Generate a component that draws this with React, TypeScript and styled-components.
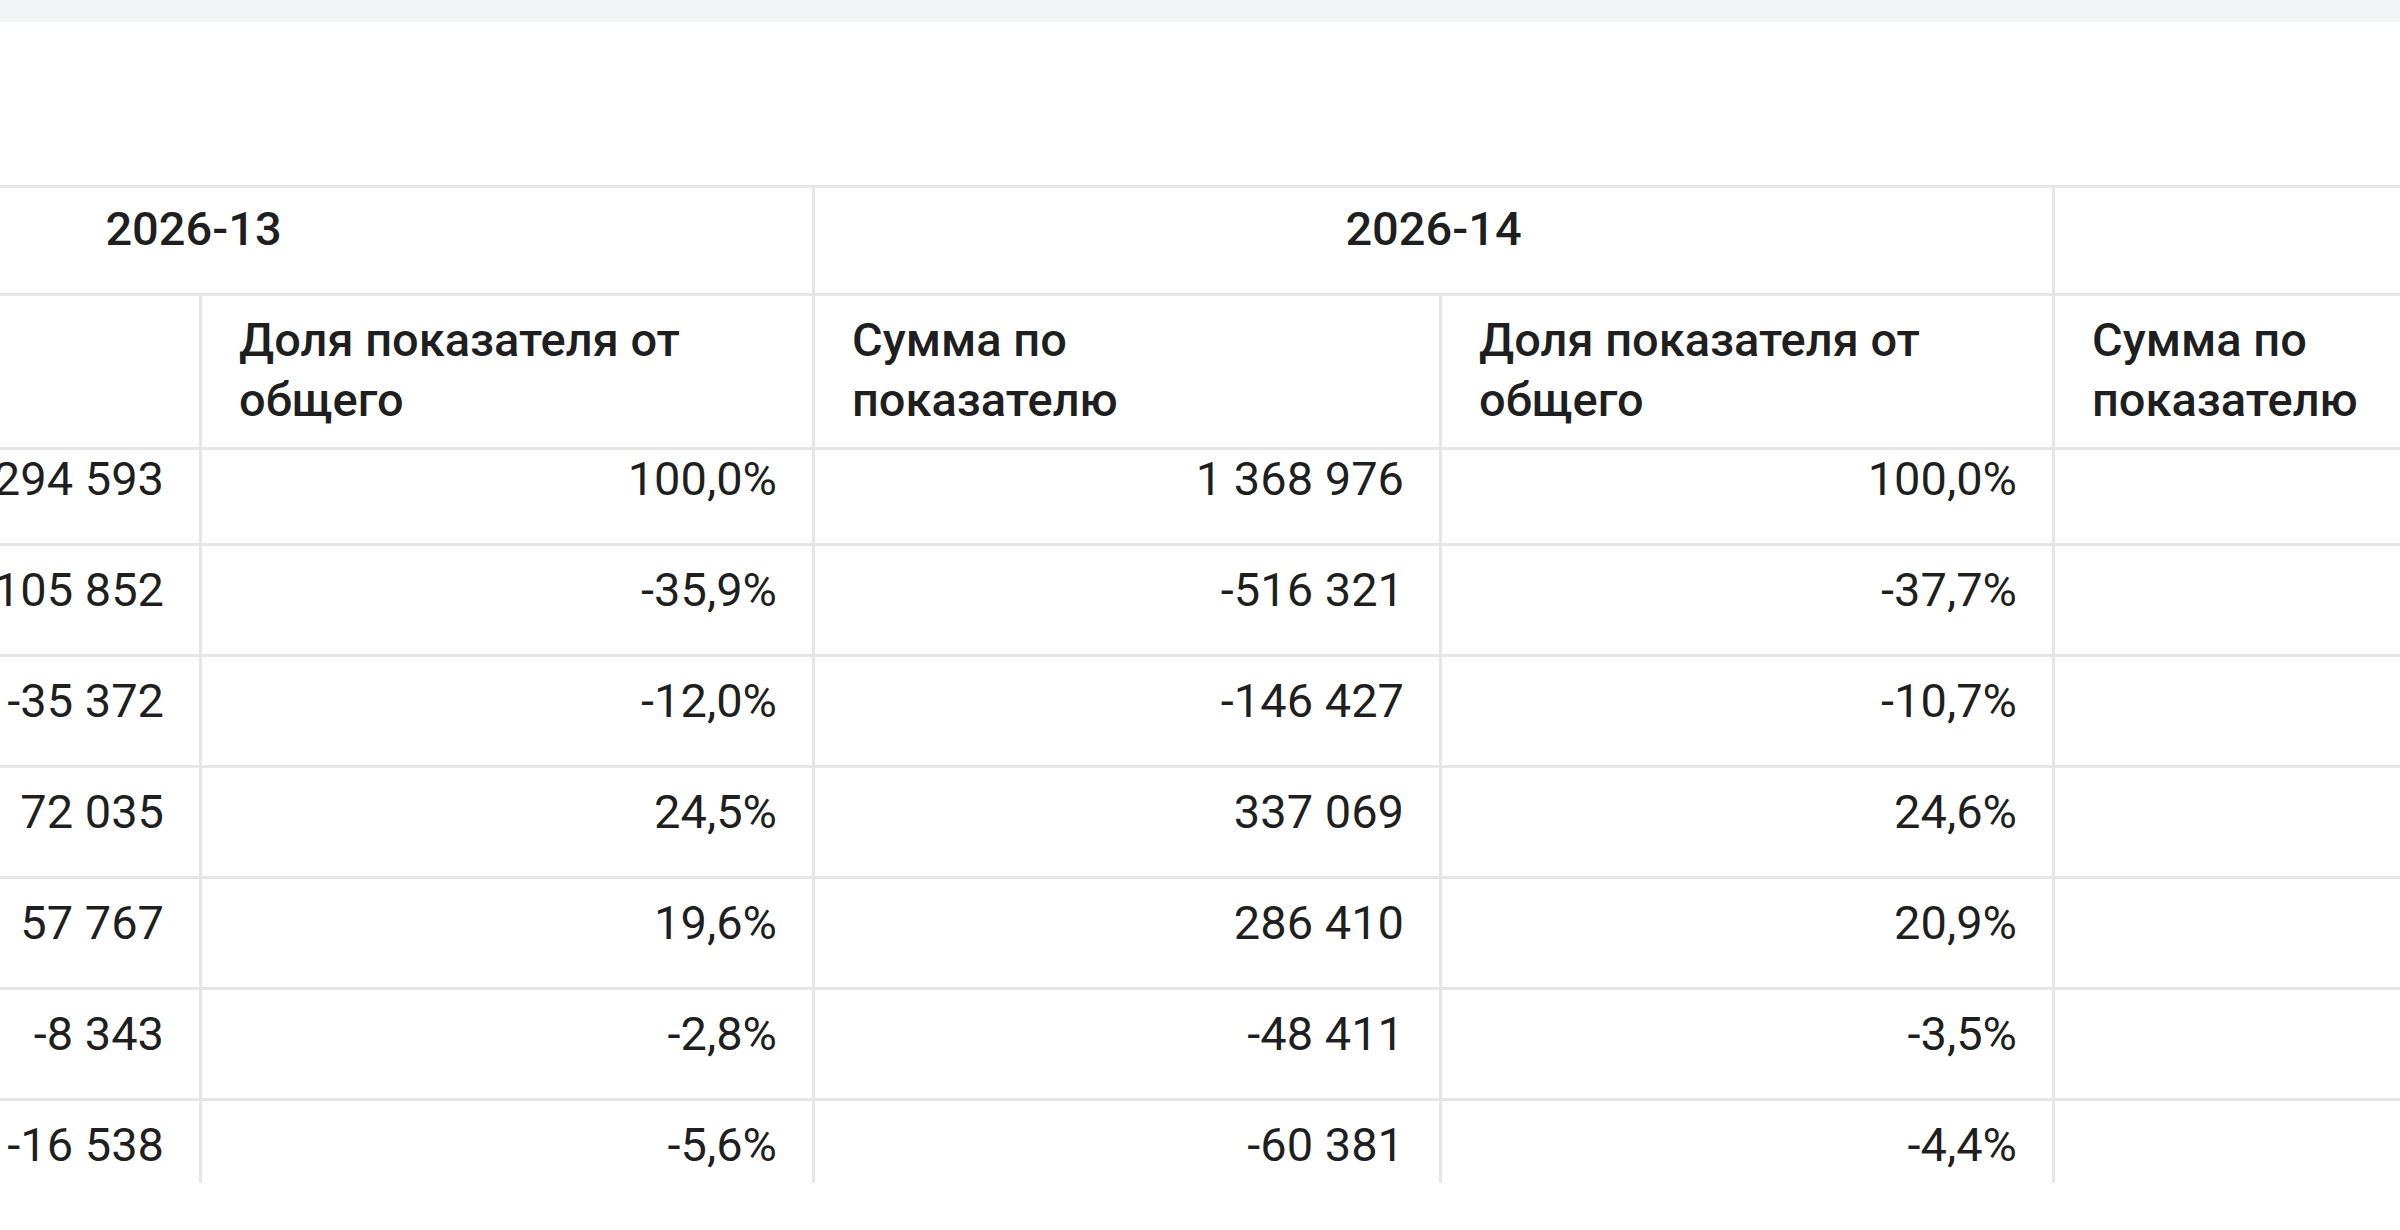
import React, { useLayoutEffect, useRef } from "react";
import styled, { createGlobalStyle } from "styled-components";

const GlobalStyle = createGlobalStyle`
  html, body {
    margin: 0;
    padding: 0;
    background: #ffffff;
  }
  body {
    font-family: Roboto, "Liberation Sans", Arial, sans-serif;
    color: rgba(0, 0, 0, 0.88);
  }
`;

const LINE = "#e6e6e6";
const SUM_W = 627;
const SHARE_W = 613;

type Week = {
  name: string;
  rows: [string, string][];
};

const nb = (s: string) => s.replace(/ /g, "\u00A0");

const weeks: Week[] = [
  {
    name: "2026-13",
    rows: [
      ["294 593", "100,0%"],
      ["-105 852", "-35,9%"],
      ["-35 372", "-12,0%"],
      ["72 035", "24,5%"],
      ["57 767", "19,6%"],
      ["-8 343", "-2,8%"],
      ["-16 538", "-5,6%"],
    ],
  },
  {
    name: "2026-14",
    rows: [
      ["1 368 976", "100,0%"],
      ["-516 321", "-37,7%"],
      ["-146 427", "-10,7%"],
      ["337 069", "24,6%"],
      ["286 410", "20,9%"],
      ["-48 411", "-3,5%"],
      ["-60 381", "-4,4%"],
    ],
  },
  {
    name: "2026-15",
    rows: [
      ["", ""],
      ["", ""],
      ["", ""],
      ["", ""],
      ["", ""],
      ["", ""],
      ["", ""],
    ],
  },
];

const Page = styled.div`
  display: flex;
  flex-direction: column;
  width: 2400px;
`;

const TopStrip = styled.div`
  height: 22px;
  background: #f3f4f6;
`;

const Spacer = styled.div`
  height: 163px;
`;

const Viewport = styled.div`
  height: 998px;
  overflow: hidden;
`;

const Sheet = styled.div`
  width: max-content;
  font-size: 47px;
  line-height: 60px;
`;

const HeadRow = styled.div`
  display: flex;
  position: sticky;
  top: 0;
  z-index: 2;
  background: #ffffff;
  border-top: 3px solid ${LINE};
`;

const SubHeadRow = styled.div`
  display: flex;
  position: sticky;
  top: 111px;
  z-index: 2;
  background: #ffffff;
`;

const DataRow = styled.div`
  display: flex;
`;

const GroupCell = styled.div`
  box-sizing: border-box;
  width: ${SUM_W + SHARE_W}px;
  height: 108px;
  padding-top: 11px;
  text-align: center;
  font-weight: 500;
  white-space: nowrap;
  border-right: 3px solid ${LINE};
  border-bottom: 3px solid ${LINE};
`;

const ColumnCell = styled.div<{ $w: number }>`
  box-sizing: border-box;
  width: ${(p) => p.$w}px;
  height: 154px;
  padding: 14px 35px 0 37px;
  font-weight: 500;
  border-right: 3px solid ${LINE};
  border-bottom: 3px solid ${LINE};
`;

const Label = styled.div`
  max-width: 455px;
`;

const ValueCell = styled.div<{ $w: number }>`
  box-sizing: border-box;
  width: ${(p) => p.$w}px;
  height: 111px;
  padding: 14px 35px 0 37px;
  text-align: right;
  white-space: nowrap;
  border-right: 3px solid ${LINE};
  border-bottom: 3px solid ${LINE};
`;

export default function App() {
  const viewportRef = useRef<HTMLDivElement>(null);

  useLayoutEffect(() => {
    const el = viewportRef.current;
    if (el) {
      el.scrollLeft = 425;
      el.scrollTop = 15;
    }
  }, []);

  const rowCount = weeks[0].rows.length;

  return (
    <Page>
      <GlobalStyle />
      <TopStrip />
      <Spacer />
      <Viewport ref={viewportRef}>
        <Sheet>
          <HeadRow>
            {weeks.map((w) => (
              <GroupCell key={w.name}>{w.name}</GroupCell>
            ))}
          </HeadRow>
          <SubHeadRow>
            {weeks.map((w) => (
              <React.Fragment key={w.name}>
                <ColumnCell $w={SUM_W}>
                  <Label>Сумма по показателю</Label>
                </ColumnCell>
                <ColumnCell $w={SHARE_W}>
                  <Label>Доля показателя от общего</Label>
                </ColumnCell>
              </React.Fragment>
            ))}
          </SubHeadRow>
          {Array.from({ length: rowCount }).map((_, i) => (
            <DataRow key={i}>
              {weeks.map((w) => (
                <React.Fragment key={w.name}>
                  <ValueCell $w={SUM_W}>{nb(w.rows[i][0])}</ValueCell>
                  <ValueCell $w={SHARE_W}>{nb(w.rows[i][1])}</ValueCell>
                </React.Fragment>
              ))}
            </DataRow>
          ))}
        </Sheet>
      </Viewport>
    </Page>
  );
}
